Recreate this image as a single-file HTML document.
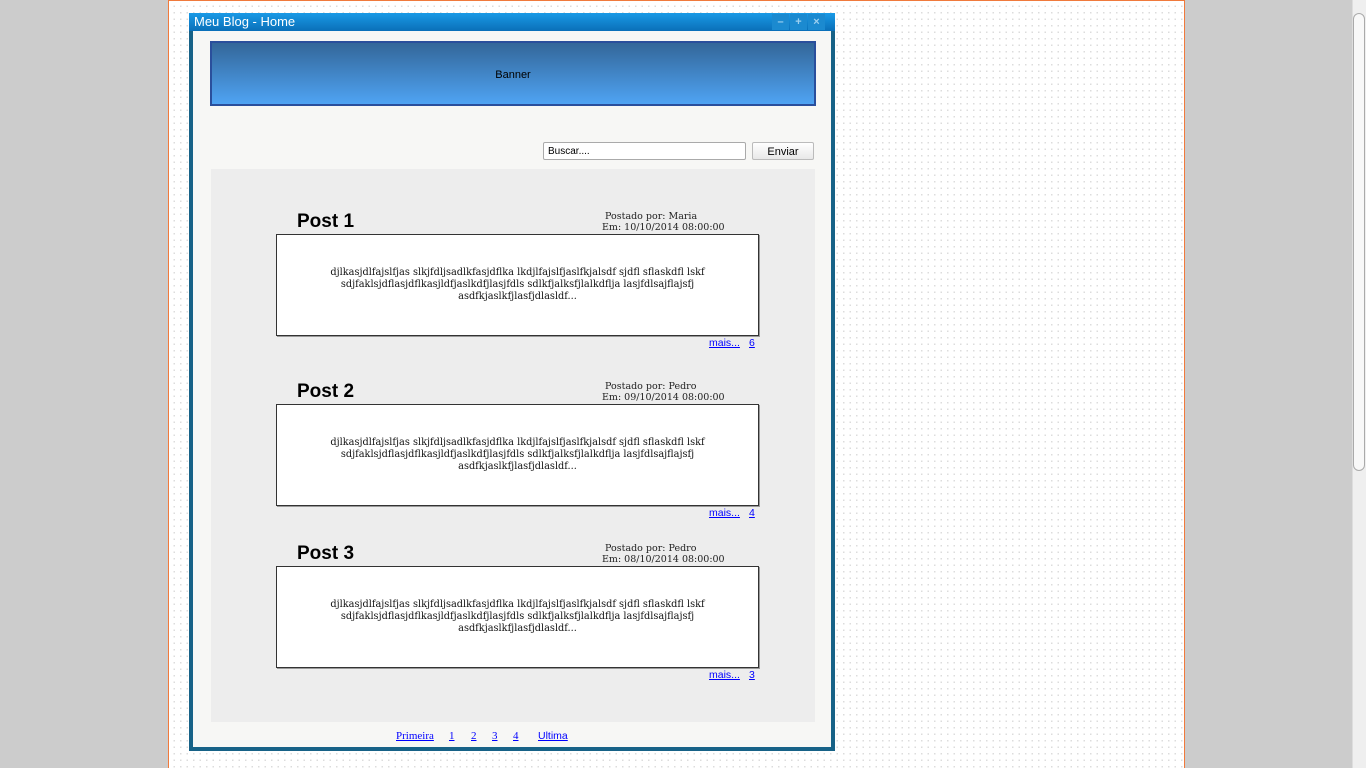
<!DOCTYPE html>
<html><head><meta charset="utf-8"><style>
*{margin:0;padding:0;box-sizing:border-box}
body{width:1366px;height:768px;background:#cccccc;position:relative;overflow:hidden;font-family:"Liberation Sans",sans-serif}
.canvas{position:absolute;left:168px;top:0;width:1017px;height:768px;background:#fff;border:1px solid #f07a3c;border-bottom:none;
background-image:radial-gradient(circle,#dcdcdc 0.7px,transparent 1px);background-size:6.5px 6.5px;background-position:2px 2px}
.sb{position:absolute;left:1352px;top:0;width:14px;height:768px;background:#efefef;border-left:1px solid #ddd}
.thumb{position:absolute;left:1353px;top:13px;width:12px;height:458px;background:#f8f8f8;border:1px solid #aaa;border-radius:6px}
.win{position:absolute;left:189px;top:13px;width:646px;height:738px;background:#f7f7f5;border:4px solid #176287;border-top:none}
.tb{position:absolute;left:-4px;top:0;width:646px;height:18px;background:linear-gradient(#1a9ae6,#0a6fb8);color:#fff;font-size:13px;line-height:18px;padding-left:5px}
.tbb{position:absolute;top:1px;width:17px;height:16px;background:#1b8ad0;color:#9cd0f0;font-size:11px;text-align:center;line-height:16px;font-weight:bold}
.banner{position:absolute;left:17px;top:28px;width:606px;height:65px;border:2px solid #2a4f9c;background:linear-gradient(#336699,#4fa3f3);text-align:center;line-height:64px;font-size:11px;color:#000}
.inp{position:absolute;left:350px;top:129px;width:203px;height:18px;border:1px solid #aaa;border-radius:2px;background:#fff;font-size:10px;line-height:17px;padding-left:4px}
.btn{position:absolute;left:559px;top:129px;width:62px;height:18px;border:1px solid #bbb;border-radius:2px;background:linear-gradient(#fff,#e8e8e8);font-size:11px;line-height:18px;text-align:center}
.panel{position:absolute;left:18px;top:156px;width:604px;height:553px;background:#ededed}
.post{position:absolute;left:0;width:604px}
.pt{position:absolute;left:86px;top:1px;font-size:19px;font-weight:bold;font-family:"Liberation Sans",sans-serif}
.meta{position:absolute;left:391px;top:1px;font-family:"DejaVu Serif",serif;font-size:9.5px;line-height:11px;color:#222}
.box{position:absolute;left:65px;top:24px;width:483px;height:102px;background:#fff;border:1px solid #333;box-shadow:1px 1px 0 #999;font-family:"DejaVu Serif",serif;font-size:9.75px;line-height:12px;text-align:center;padding:32px 40px 0;color:#111}
.lk{position:absolute;top:127px;font-size:10.5px;color:#00f;text-decoration:underline}
.pg{position:absolute;top:717px;font-family:"Liberation Serif",serif;font-size:11px;color:#00f;text-decoration:underline}
</style></head><body>
<div class="canvas"></div>
<div class="sb"></div><div class="thumb"></div>
<div class="win">
<div class="tb">Meu Blog - Home
<div class="tbb" style="left:583px">–</div><div class="tbb" style="left:601px">+</div><div class="tbb" style="left:619px">×</div></div>
<div class="banner">Banner</div>
<div class="inp">Buscar....</div><div class="btn">Enviar</div>
<div class="panel">
<div class="post" style="top:41px"><div class="pt">Post 1</div><div class="meta">&nbsp;Postado por: Maria<br>Em: 10/10/2014 08:00:00</div>
<div class="box">djlkasjdlfajslfjas slkjfdljsadlkfasjdflka lkdjlfajslfjaslfkjalsdf sjdfl sflaskdfl lskf sdjfaklsjdflasjdflkasjldfjaslkdfjlasjfdls sdlkfjalksfjlalkdflja lasjfdlsajflajsfj asdfkjaslkfjlasfjdlasldf...</div>
<span class="lk" style="left:498px">mais...</span><span class="lk" style="left:538px">6</span></div>
<div class="post" style="top:211px"><div class="pt">Post 2</div><div class="meta">&nbsp;Postado por: Pedro<br>Em: 09/10/2014 08:00:00</div>
<div class="box">djlkasjdlfajslfjas slkjfdljsadlkfasjdflka lkdjlfajslfjaslfkjalsdf sjdfl sflaskdfl lskf sdjfaklsjdflasjdflkasjldfjaslkdfjlasjfdls sdlkfjalksfjlalkdflja lasjfdlsajflajsfj asdfkjaslkfjlasfjdlasldf...</div>
<span class="lk" style="left:498px">mais...</span><span class="lk" style="left:538px">4</span></div>
<div class="post" style="top:373px"><div class="pt">Post 3</div><div class="meta">&nbsp;Postado por: Pedro<br>Em: 08/10/2014 08:00:00</div>
<div class="box">djlkasjdlfajslfjas slkjfdljsadlkfasjdflka lkdjlfajslfjaslfkjalsdf sjdfl sflaskdfl lskf sdjfaklsjdflasjdflkasjldfjaslkdfjlasjfdls sdlkfjalksfjlalkdflja lasjfdlsajflajsfj asdfkjaslkfjlasfjdlasldf...</div>
<span class="lk" style="left:498px">mais...</span><span class="lk" style="left:538px">3</span></div>
</div>
<span class="pg" style="left:203px">Primeira</span><span class="pg" style="left:256px">1</span><span class="pg" style="left:278px">2</span><span class="pg" style="left:299px">3</span><span class="pg" style="left:320px">4</span><span class="pg" style="left:345px;font-family:'Liberation Sans',sans-serif;font-size:10.5px">Ultima</span>
</div>
</body></html>
